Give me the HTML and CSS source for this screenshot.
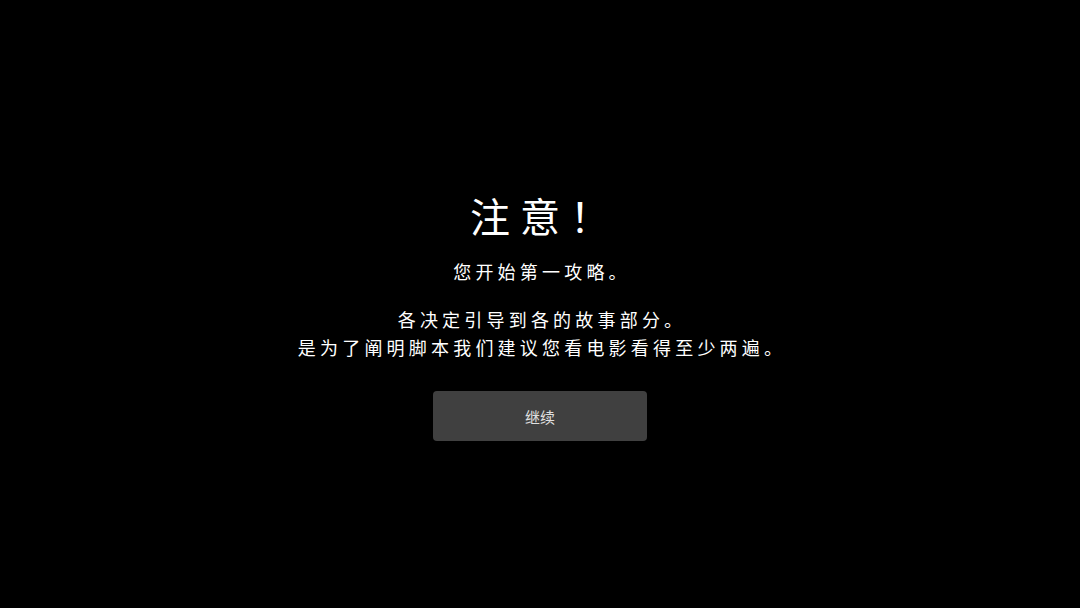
FILE: index.html
```html
<!DOCTYPE html>
<html lang="zh-CN">
<head>
    <meta charset="UTF-8">
    <meta name="viewport" content="width=device-width, initial-scale=1.0">
    <title>注意</title>
    <link rel="stylesheet" href="styles.css">
</head>
<body>
    <div class="notice">
        <div class="title">注意！</div>
        <div class="line first">您开始第一攻略。</div>
        <div class="para">
            <div class="line">各决定引导到各的故事部分。</div>
            <div class="line">是为了阐明脚本我们建议您看电影看得至少两遍。</div>
        </div>
        <button class="btn">继续</button>
    </div>
</body>
</html>
```

FILE: styles.css
```css
* {
    box-sizing: border-box;
}

body, html {
    margin: 0;
    padding: 0;
}

body {
    width: 1080px;
    height: 608px;
    background-color: #000;
    font-family: "Noto Sans CJK SC", "Noto Sans", sans-serif;
    color: #fff;
}

.notice {
    height: 100%;
    display: flex;
    flex-direction: column;
    align-items: center;
    padding-top: 190px;
}

.title {
    font-size: 40px;
    line-height: 50px;
    letter-spacing: 10px;
    padding-left: 10px;
    font-weight: 400;
}

.line {
    font-size: 18px;
    line-height: 28px;
    letter-spacing: 4.2px;
    padding-left: 4px;
    text-align: center;
}

.first {
    margin-top: 17px;
}

.para {
    margin-top: 20px;
}

.btn {
    margin-top: 30px;
    width: 214px;
    height: 50px;
    border: none;
    border-radius: 4px;
    background-color: #404040;
    color: #e0e0e0;
    font-family: "Noto Sans CJK SC", sans-serif;
    font-size: 15px;
}
```
